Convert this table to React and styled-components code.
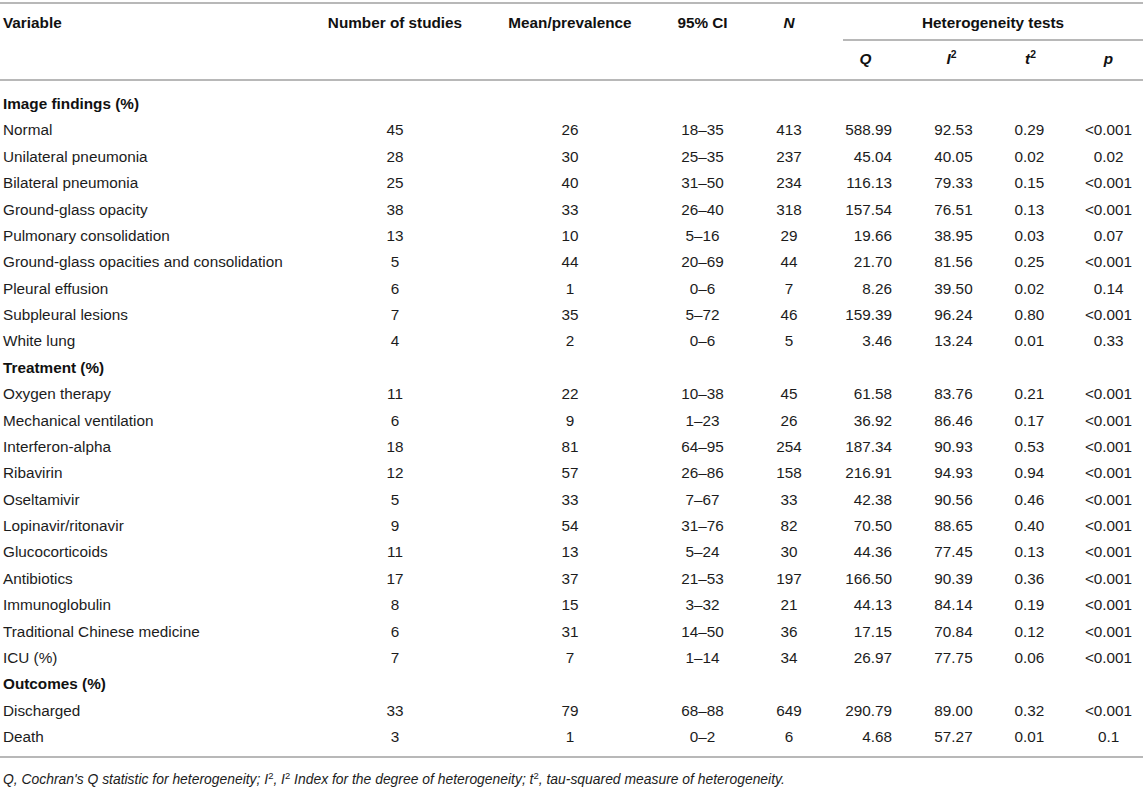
import React from 'react';
import styled, { createGlobalStyle } from 'styled-components';

const Global = createGlobalStyle`
  html, body { margin: 0; padding: 0; background: #fff; }
  body { font-family: "Liberation Sans", Arial, Helvetica, sans-serif; color: #1c1c1c; }
`;

const Wrap = styled.div`
  width: 1143px;
  padding-top: 2px;
`;

const Table = styled.table`
  width: 100%;
  table-layout: fixed;
  border-collapse: collapse;
  font-size: 15.3px;
  border-top: 2px solid #b8b8b8;
  border-bottom: 2px solid #b8b8b8;
`;

const Col = styled.col`
  width: ${(p) => p.$w}px;
`;

const HeadCell = styled.th`
  font-weight: bold;
  color: #111;
  line-height: 18px;
  vertical-align: top;
  text-align: ${(p) => p.$align || 'center'};
  padding: ${(p) => (p.$top ? '10px 0 7px' : '9px 0 11px')};
  padding-left: ${(p) => p.$pl || 0}px;
  padding-right: ${(p) => p.$pr || 0}px;
  white-space: nowrap;
`;

const GroupHead = styled(HeadCell)`
  border-bottom: 2px solid #b8b8b8;
`;

const THead = styled.thead`
  border-bottom: 2px solid #b8b8b8;
`;

const Em = styled.i`
  font-style: italic;
`;

const Sup = styled.sup`
  font-size: 0.68em;
  line-height: 0;
  vertical-align: 0.55em;
  font-style: normal;
`;

const Row = styled.tr`
  & > td { padding-top: 4.2px; padding-bottom: 4.2px; }
  &:first-child > td { padding-top: 14px; }
  &:last-child > td { padding-bottom: 10px; }
`;

const Cell = styled.td`
  line-height: 18px;
  text-align: ${(p) => p.$align || 'center'};
  padding-left: ${(p) => p.$pl || 0}px;
  padding-right: ${(p) => p.$pr || 0}px;
  white-space: nowrap;
  color: #1c1c1c;
`;

const SectionCell = styled.td`
  font-weight: bold;
  color: #111;
  line-height: 18px;
  padding-left: 3px;
  padding-right: 0;
  text-align: left;
`;

const Footnote = styled.p`
  margin: 13px 0 0 3px;
  font-size: 13.9px;
  font-style: italic;
  color: #1c1c1c;
  line-height: 16px;
`;

const rows = [
  { section: 'Image findings (%)' },
  ['Normal', '45', '26', '18–35', '413', '588.99', '92.53', '0.29', '<0.001'],
  ['Unilateral pneumonia', '28', '30', '25–35', '237', '45.04', '40.05', '0.02', '0.02'],
  ['Bilateral pneumonia', '25', '40', '31–50', '234', '116.13', '79.33', '0.15', '<0.001'],
  ['Ground-glass opacity', '38', '33', '26–40', '318', '157.54', '76.51', '0.13', '<0.001'],
  ['Pulmonary consolidation', '13', '10', '5–16', '29', '19.66', '38.95', '0.03', '0.07'],
  ['Ground-glass opacities and consolidation', '5', '44', '20–69', '44', '21.70', '81.56', '0.25', '<0.001'],
  ['Pleural effusion', '6', '1', '0–6', '7', '8.26', '39.50', '0.02', '0.14'],
  ['Subpleural lesions', '7', '35', '5–72', '46', '159.39', '96.24', '0.80', '<0.001'],
  ['White lung', '4', '2', '0–6', '5', '3.46', '13.24', '0.01', '0.33'],
  { section: 'Treatment (%)' },
  ['Oxygen therapy', '11', '22', '10–38', '45', '61.58', '83.76', '0.21', '<0.001'],
  ['Mechanical ventilation', '6', '9', '1–23', '26', '36.92', '86.46', '0.17', '<0.001'],
  ['Interferon-alpha', '18', '81', '64–95', '254', '187.34', '90.93', '0.53', '<0.001'],
  ['Ribavirin', '12', '57', '26–86', '158', '216.91', '94.93', '0.94', '<0.001'],
  ['Oseltamivir', '5', '33', '7–67', '33', '42.38', '90.56', '0.46', '<0.001'],
  ['Lopinavir/ritonavir', '9', '54', '31–76', '82', '70.50', '88.65', '0.40', '<0.001'],
  ['Glucocorticoids', '11', '13', '5–24', '30', '44.36', '77.45', '0.13', '<0.001'],
  ['Antibiotics', '17', '37', '21–53', '197', '166.50', '90.39', '0.36', '<0.001'],
  ['Immunoglobulin', '8', '15', '3–32', '21', '44.13', '84.14', '0.19', '<0.001'],
  ['Traditional Chinese medicine', '6', '31', '14–50', '36', '17.15', '70.84', '0.12', '<0.001'],
  ['ICU (%)', '7', '7', '1–14', '34', '26.97', '77.75', '0.06', '<0.001'],
  { section: 'Outcomes (%)' },
  ['Discharged', '33', '79', '68–88', '649', '290.79', '89.00', '0.32', '<0.001'],
  ['Death', '3', '1', '0–2', '6', '4.68', '57.27', '0.01', '0.1'],
];

const widths = [320, 150, 200, 65, 108, 75, 75, 75, 75];

export default function App() {
  return (
    <Wrap>
      <Global />
      <Table>
        <colgroup>
          {widths.map((w, i) => (
            <Col key={i} $w={w} />
          ))}
        </colgroup>
        <THead>
          <tr>
            <HeadCell rowSpan={2} $top $align="left" $pl={3}>Variable</HeadCell>
            <HeadCell rowSpan={2} $top>Number of studies</HeadCell>
            <HeadCell rowSpan={2} $top>Mean/prevalence</HeadCell>
            <HeadCell rowSpan={2} $top>95% CI</HeadCell>
            <HeadCell rowSpan={2} $top><Em>N</Em></HeadCell>
            <GroupHead colSpan={4} $top>Heterogeneity tests</GroupHead>
          </tr>
          <tr>
            <HeadCell $pr={30}><Em>Q</Em></HeadCell>
            <HeadCell $pr={8}><Em>I</Em><Sup>2</Sup></HeadCell>
            <HeadCell><Em>t</Em><Sup>2</Sup></HeadCell>
            <HeadCell $pl={6}><Em>p</Em></HeadCell>
          </tr>
        </THead>
        <tbody>
          {rows.map((r, i) =>
            r.section ? (
              <Row key={i}>
                <SectionCell colSpan={9}>{r.section}</SectionCell>
              </Row>
            ) : (
              <Row key={i}>
                <Cell $align="left" $pl={3}>{r[0]}</Cell>
                <Cell>{r[1]}</Cell>
                <Cell>{r[2]}</Cell>
                <Cell>{r[3]}</Cell>
                <Cell>{r[4]}</Cell>
                <Cell $align="right" $pr={26}>{r[5]}</Cell>
                <Cell $pr={4}>{r[6]}</Cell>
                <Cell $pr={2}>{r[7]}</Cell>
                <Cell $pl={6}>{r[8]}</Cell>
              </Row>
            )
          )}
        </tbody>
      </Table>
      <Footnote>
        Q, Cochran's Q statistic for heterogeneity; I<Sup>2</Sup>, I<Sup>2</Sup> Index for the degree of heterogeneity; t<Sup>2</Sup>, tau-squared measure of heterogeneity.
      </Footnote>
    </Wrap>
  );
}
